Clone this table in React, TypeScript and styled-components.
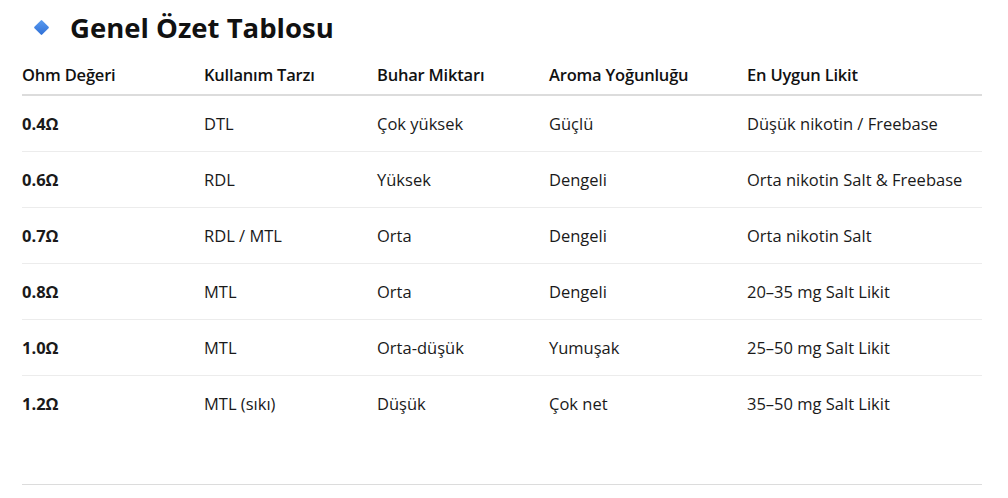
import React from "react";
import styled, { createGlobalStyle } from "styled-components";

const Global = createGlobalStyle`
  html, body { margin: 0; padding: 0; background: #fff; }
  body { font-family: "Open Sans", "Noto Sans", sans-serif; color: #1a1a1a; }
`;

const Page = styled.div`
  width: 1008px;
  height: 498px;
  box-sizing: border-box;
  padding: 0 26px 0 22px;
  display: flex;
  flex-direction: column;
`;

const TitleRow = styled.h2`
  margin: 0;
  height: 54px;
  display: flex;
  align-items: center;
  gap: 23px;
  padding-left: 14px;
  font-family: "Open Sans", sans-serif;
  font-size: 27.5px;
  font-weight: 700;
  color: #111;
`;

const Diamond = styled.span`
  width: 11px;
  height: 11px;
  transform: rotate(45deg);
  background: linear-gradient(135deg, #5a9cf0, #2f6fd6);
  border-radius: 1px;
  flex: none;
`;

const Table = styled.table`
  width: 960px;
  border-collapse: collapse;
  table-layout: fixed;
  font-size: 16.5px;
`;

const HeadCell = styled.th<{ w: number }>`
  width: ${(p) => p.w}px;
  text-align: left;
  font-weight: 600;
  height: 40px;
  padding: 0;
  border-bottom: 2px solid #dcdcdc;
  vertical-align: middle;
  color: #111;
  letter-spacing: -0.2px;
`;

const Row = styled.tr<{ last?: boolean }>`
  height: 56px;
  border-bottom: ${(p) => (p.last ? "none" : "1px solid #ececec")};
`;

const Cell = styled.td<{ strong?: boolean }>`
  padding: 0;
  font-weight: ${(p) => (p.strong ? 700 : 400)};
  color: #1a1a1a;
  vertical-align: middle;
`;

const Spacer = styled.div`
  flex: 1;
`;

const Rule = styled.hr`
  width: 960px;
  margin: 0 0 13px 0;
  border: none;
  border-top: 1px solid #dcdcdc;
`;

const widths = [182, 173, 172, 198, 235];
const headers = ["Ohm Değeri", "Kullanım Tarzı", "Buhar Miktarı", "Aroma Yoğunluğu", "En Uygun Likit"];
const rows = [
  ["0.4Ω", "DTL", "Çok yüksek", "Güçlü", "Düşük nikotin / Freebase"],
  ["0.6Ω", "RDL", "Yüksek", "Dengeli", "Orta nikotin Salt & Freebase"],
  ["0.7Ω", "RDL / MTL", "Orta", "Dengeli", "Orta nikotin Salt"],
  ["0.8Ω", "MTL", "Orta", "Dengeli", "20–35 mg Salt Likit"],
  ["1.0Ω", "MTL", "Orta-düşük", "Yumuşak", "25–50 mg Salt Likit"],
  ["1.2Ω", "MTL (sıkı)", "Düşük", "Çok net", "35–50 mg Salt Likit"],
];

export default function App() {
  return (
    <>
      <Global />
      <Page>
        <TitleRow>
          <Diamond />
          Genel Özet Tablosu
        </TitleRow>
        <Table>
          <thead>
            <tr>
              {headers.map((h, i) => (
                <HeadCell key={h} w={widths[i]}>
                  {h}
                </HeadCell>
              ))}
            </tr>
          </thead>
          <tbody>
            {rows.map((r, ri) => (
              <Row key={ri} last={ri === rows.length - 1}>
                {r.map((c, ci) => (
                  <Cell key={ci} strong={ci === 0}>
                    {c}
                  </Cell>
                ))}
              </Row>
            ))}
          </tbody>
        </Table>
        <Spacer />
        <Rule />
      </Page>
    </>
  );
}
